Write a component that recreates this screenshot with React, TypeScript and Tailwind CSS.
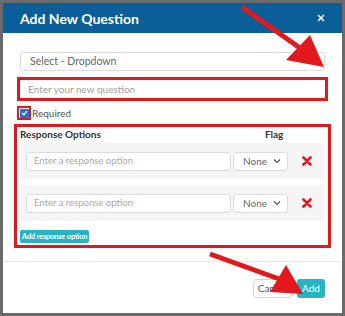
import { X } from 'lucide-react';

const font = { fontFamily: 'Lato, "Open Sans", sans-serif' };

function Chevron() {
  return (
    <svg width="8" height="6" viewBox="0 0 8 6" className="text-gray-600">
      <path d="M1 1.5 L4 4.5 L7 1.5" fill="none" stroke="currentColor" strokeWidth="1.2" />
    </svg>
  );
}

function RedX() {
  return (
    <svg width="10" height="10" viewBox="0 0 10 10">
      <path d="M1.5 1.5 L8.5 8.5 M8.5 1.5 L1.5 8.5" stroke="#e0171c" strokeWidth="2.6" strokeLinecap="round" />
    </svg>
  );
}

function OptionRow() {
  return (
    <div className="flex items-center h-[36px] bg-[#f5f5f5] pl-[7px] mr-[4px] ml-[2px]">
      <div className="w-[205px] h-[19px] bg-white border border-[#dcdcdc] rounded-[3px] flex items-center pl-[7px] text-[9.5px] text-[#a8a8a8]">
        Enter a response option
      </div>
      <div className="ml-[2px] w-[55px] h-[19px] bg-white border border-[#dcdcdc] rounded-[3px] flex items-center justify-between pl-[9px] pr-[6px] text-[10px] text-[#666]">
        <span>None</span>
        <Chevron />
      </div>
      <div className="ml-[14px]">
        <RedX />
      </div>
    </div>
  );
}

export default function App() {
  return (
    <div className="relative w-[345px] h-[316px] bg-[#6a6a6a] p-[3px] overflow-hidden" style={font}>
      <div className="w-[339px] h-[310px] bg-white flex flex-col">
        <div className="h-[30px] bg-[#0a5f98] flex items-center justify-between pl-[17px] pr-[16px]">
          <span className="text-white font-bold text-[14px]">Add New Question</span>
          <X className="w-[10px] h-[10px] text-white" strokeWidth={4} />
        </div>

        <div className="px-[17px] pt-[19px]">
          <div className="h-[19px] border border-[#dcdcdc] rounded-[3px] flex items-center justify-between pl-[9px] pr-[2px] text-[10.5px] text-[#666]">
            <span>Select - Dropdown</span>
            <Chevron />
          </div>

          <div className="mt-[6px] -mx-[3px] h-[24px] border-[3px] border-[#e3181d] flex items-center pl-[8px] text-[10px] text-[#a0a0a0]">
            Enter your new question
          </div>

          <div className="mt-[5px] flex items-center h-[14px]">
            <div className="-ml-[3px] w-[14px] h-[14px] border-[2px] border-[#e3181d] flex items-center justify-center">
              <div className="w-[9px] h-[9px] bg-[#1f6fd6] rounded-[1px] flex items-center justify-center">
                <svg width="7" height="6" viewBox="0 0 7 6">
                  <path d="M1 3 L2.8 4.8 L6 1" fill="none" stroke="white" strokeWidth="1.3" />
                </svg>
              </div>
            </div>
            <span className="ml-[1px] text-[10px] text-[#555]">Required</span>
          </div>

          <div className="mt-[4px] -mx-[6px] h-[124px] border-[3px] border-[#e3181d] pt-[1px]">
            <div className="flex text-[10px] font-bold text-[#333] h-[13px] items-center pl-[3px]">
              <span>Response Options</span>
              <span className="ml-[164px]">Flag</span>
            </div>
            <div className="mt-[2px] flex flex-col gap-[6px]">
              <OptionRow />
              <OptionRow />
            </div>
            <div className="mt-[8px] ml-[3px] inline-flex items-center h-[13px] px-[2px] bg-[#27b3bf] rounded-[2px] text-white text-[7.5px] font-bold tracking-[-0.2px]">
              Add response option
            </div>
          </div>
        </div>

        <div className="mt-[13px] border-t border-[#e8e8e8]" />
        <div className="flex justify-end gap-[5px] pr-[17px] pt-[17px]">
          <div className="w-[39px] h-[19px] border border-[#d4d4d4] rounded-[3px] flex items-center justify-center text-[10px] text-[#555]">
            Cancel
          </div>
          <div className="w-[28px] h-[19px] bg-[#27b3bf] rounded-[3px] flex items-center justify-center text-[10px] text-white">
            Add
          </div>
        </div>
      </div>

      <svg className="absolute inset-0 pointer-events-none" width="345" height="316" viewBox="0 0 345 316">
        <line x1="242" y1="7" x2="300" y2="48" stroke="#e3181d" strokeWidth="5" />
        <polygon points="310,35 324,67 286,60" fill="#e3181d" />
        <line x1="210" y1="254" x2="282" y2="280" stroke="#e3181d" strokeWidth="5" />
        <polygon points="286,265 303,294 270,292" fill="#e3181d" />
      </svg>
    </div>
  );
}
